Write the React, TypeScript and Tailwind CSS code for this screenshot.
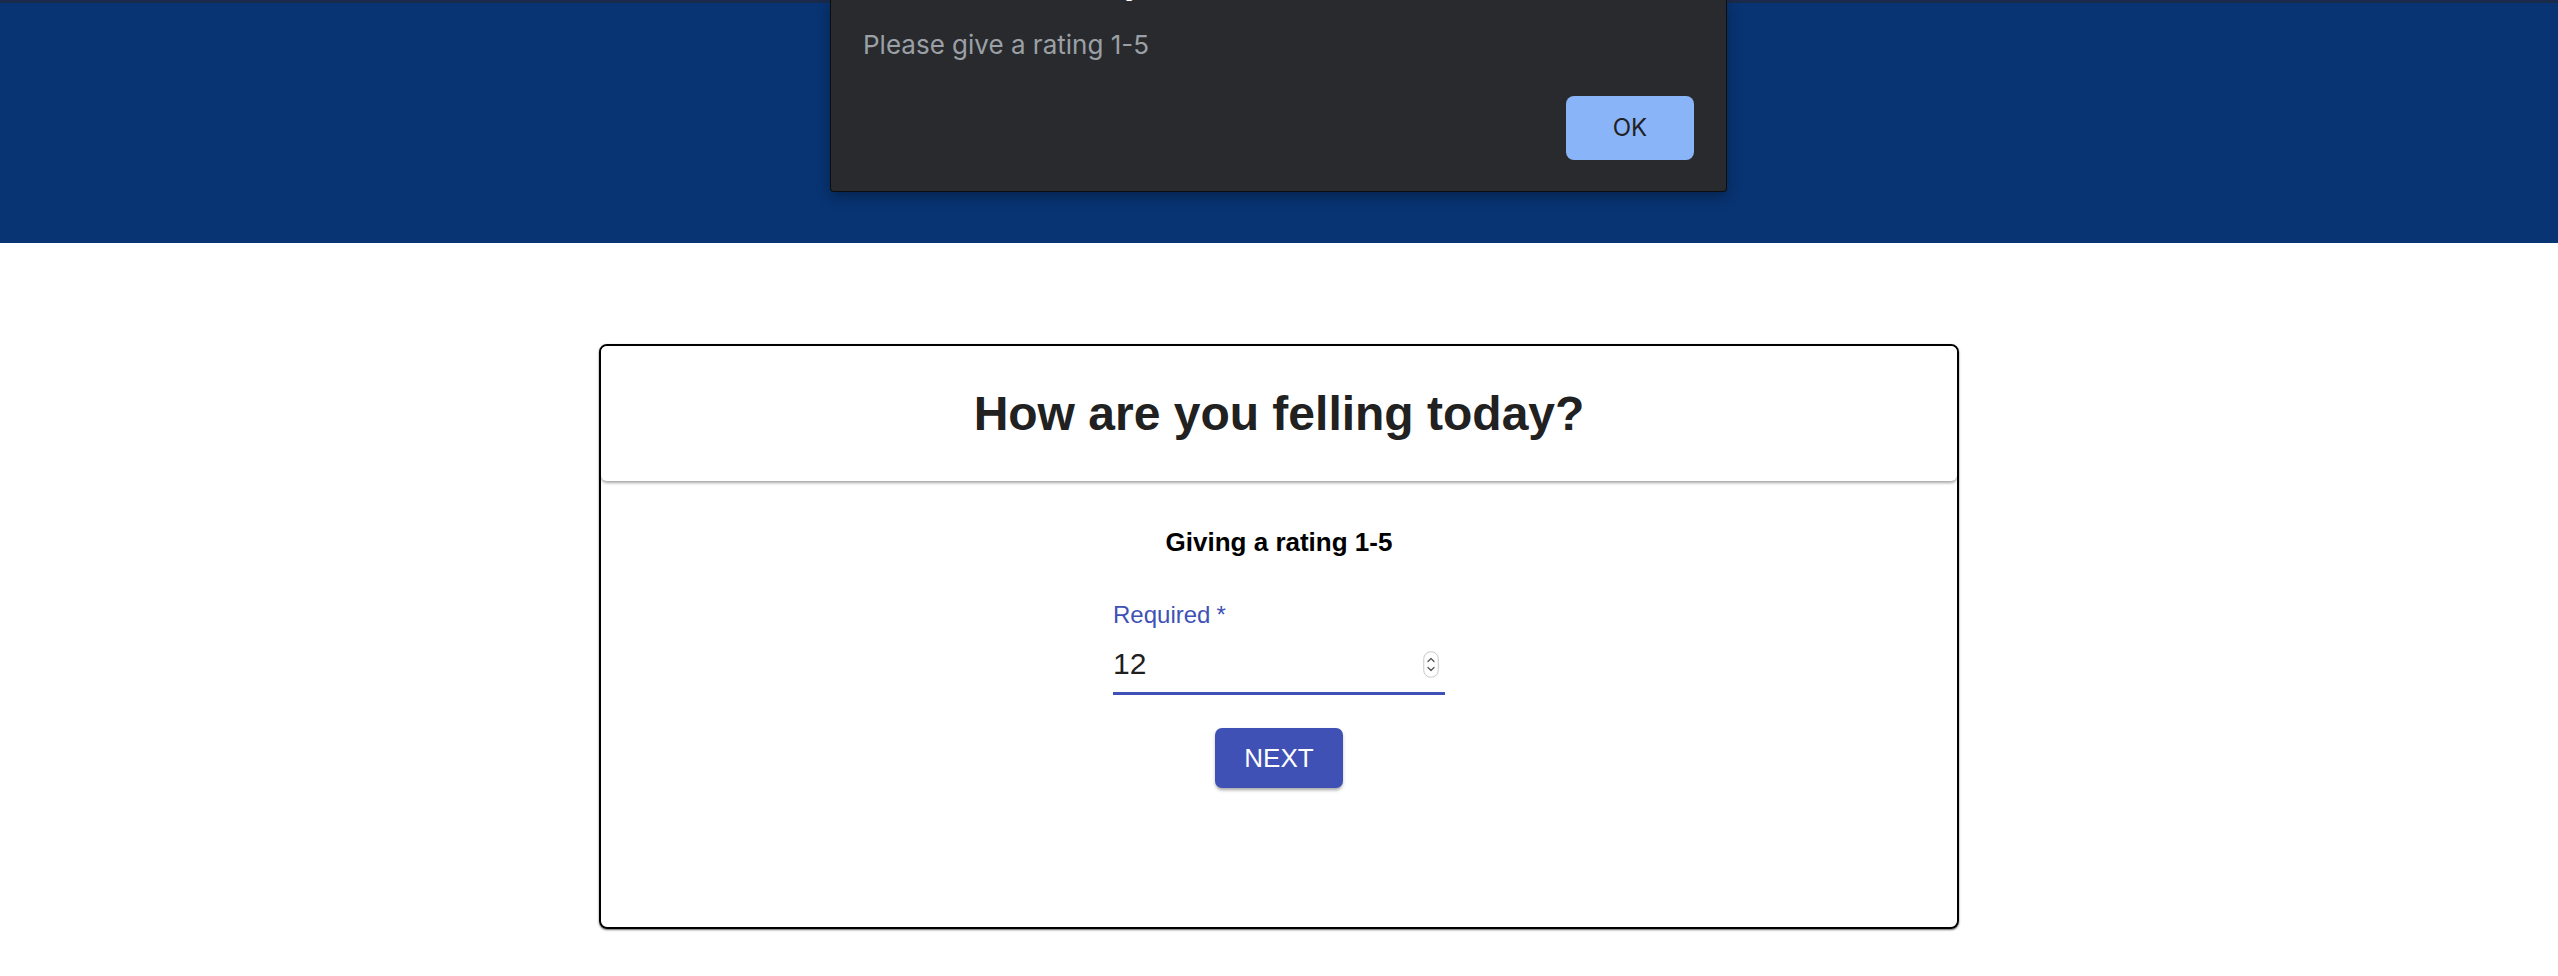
import React from "react";

function Spinner() {
  return (
    <svg width="16" height="27" viewBox="0 0 16 27" className="shrink-0">
      <rect x="0.75" y="0.75" width="14.5" height="25.5" rx="7" fill="#fff" stroke="#c8c8c8" strokeWidth="1" />
      <path d="M5 10.5 L8 7.5 L11 10.5" fill="none" stroke="#555" strokeWidth="1.3" strokeLinecap="round" strokeLinejoin="round" />
      <path d="M5 16.5 L8 19.5 L11 16.5" fill="none" stroke="#555" strokeWidth="1.3" strokeLinecap="round" strokeLinejoin="round" />
    </svg>
  );
}

export default function App() {
  return (
    <div className="relative min-h-[976px] bg-white font-['Liberation_Sans',Arial,sans-serif] overflow-hidden">
      <header className="h-[243px] bg-[#083473] border-t-[3px] border-[#1a2a4b]" />

      <main className="flex justify-center pt-[101px]">
        <div className="w-[1360px] h-[585px] border-2 border-black rounded-[8px] shadow-[0_1px_2px_rgba(0,0,0,0.6)] flex flex-col items-center">
          <div className="self-stretch h-[135px] rounded-[6px] bg-white shadow-[0_2px_3px_rgba(0,0,0,0.35)] flex items-center justify-center">
            <h1 className="text-[48px] leading-[56px] font-bold text-[#212121]">
              How are you felling today?
            </h1>
          </div>

          <p className="mt-[46px] text-[26px] leading-[30px] font-bold text-black">Giving a rating 1-5</p>

          <div className="mt-[44px] w-[332px] flex flex-col">
            <label className="text-[24px] leading-[28px] text-[#3f51b5]">
              Required<span className="ml-[6px]">*</span>
            </label>
            <div className="mt-[17px] flex items-center justify-between pr-[6px]">
              <span className="text-[30px] leading-[36px] text-[#1f1f1f]">12</span>
              <Spinner />
            </div>
            <div className="mt-[10px] h-[3px] bg-[#3f51b5]" />
          </div>

          <button className="mt-[33px] w-[128px] h-[60px] rounded-[7px] bg-[#3f51b5] text-white text-[26px] leading-none shadow-[0_3px_3px_-1px_rgba(0,0,0,0.25),0_2px_4px_rgba(0,0,0,0.14)]">
            NEXT
          </button>
        </div>
      </main>

      <div className="absolute left-[830px] top-0 w-[897px] h-[192px] bg-[#292a2d] border border-t-0 border-[#0d0d0f] rounded-b-[4px] shadow-[0_4px_14px_rgba(0,0,0,0.35)] overflow-hidden font-['Inter',sans-serif]">
        <div className="absolute left-[32px] top-[-34px] text-[30px] leading-[36px] font-semibold text-white whitespace-nowrap">
          localhost:3000 says
        </div>
        <div className="pt-[29px] pl-[32px] pr-[32px] flex flex-col">
          <p className="text-[26px] leading-[32px] text-[#9aa0a6]">Please give a rating 1-5</p>
          <div className="mt-[35px] flex justify-end">
            <button className="w-[128px] h-[64px] rounded-[8px] bg-[#8ab4f8] text-[#202124] text-[24px] leading-none">
              OK
            </button>
          </div>
        </div>
      </div>
    </div>
  );
}
